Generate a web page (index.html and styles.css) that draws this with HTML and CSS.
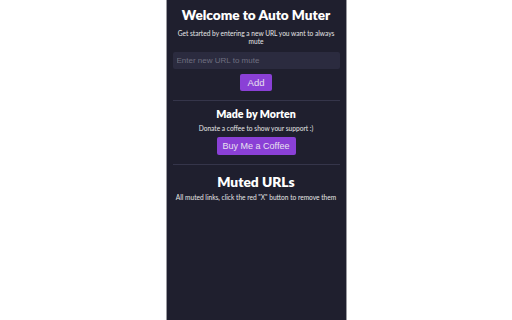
FILE: index.html
```html
<!DOCTYPE html>
<html>
<head>
<meta charset="utf-8">
<link rel="stylesheet" href="styles.css">
</head>
<body>
<div class="popup">
  <section class="section">
    <h1 class="title">Welcome to Auto Muter</h1>
    <p class="desc">Get started by entering a new URL you want to always mute</p>
    <input class="url-input" type="text" placeholder="Enter new URL to mute">
    <button class="btn add-btn">Add</button>
  </section>
  <hr class="divider">
  <section class="section">
    <h2 class="subtitle">Made by Morten</h2>
    <p class="desc tight">Donate a coffee to show your support :)</p>
    <button class="btn coffee-btn">Buy Me a Coffee</button>
  </section>
  <hr class="divider">
  <section class="section">
    <h1 class="title big">Muted URLs</h1>
    <p class="desc tight">All muted links, click the red "X" button to remove them</p>
  </section>
</div>
</body>
</html>
```
FILE: styles.css
```css
html, body {
  margin: 0;
  padding: 0;
  background: #ffffff;
  height: 100%;
}
body {
  display: flex;
  justify-content: center;
  font-family: "Lato", "Noto Sans", sans-serif;
}
.popup {
  width: 181px;
  height: 320px;
  box-sizing: border-box;
  background: #1f1f2e;
  border-left: 1px solid #9a9aa0;
  border-right: 1px solid #9a9aa0;
  padding: 0 6px;
  color: #f2f2f2;
}
.section {
  display: flex;
  flex-direction: column;
  align-items: center;
  text-align: center;
}
.title {
  margin: 6px 0 0 0;
  font-size: 13.6px;
  line-height: 19px;
  font-weight: 800;
  color: #ffffff;
}
.title.big {
  font-size: 13.8px;
  margin-top: 7px;
}
.subtitle {
  margin: 6px 0 0 0;
  font-size: 10.6px;
  line-height: 15px;
  font-weight: 800;
  color: #ffffff;
}
.desc {
  margin: 4px 0 0 0;
  font-size: 6.6px;
  line-height: 8px;
  color: #e6e6e6;
  padding: 0;
}
.desc.tight {
  margin-top: 2px;
  white-space: nowrap;
}
.url-input {
  margin-top: 7px;
  width: 100%;
  height: 17px;
  box-sizing: border-box;
  background: #2b2b3f;
  border: none;
  border-radius: 2px;
  padding: 0 4px;
  font-family: "Liberation Sans", Arial, sans-serif;
  font-size: 8px;
  color: #ddd;
  outline: none;
}
.url-input::placeholder {
  color: #6f6f80;
}
.btn {
  background: #8a40d6;
  color: #e8e0f0;
  border: none;
  border-radius: 2px;
  font-family: "Liberation Sans", Arial, sans-serif;
  font-size: 8.5px;
  padding: 0;
}
.add-btn {
  margin-top: 5px;
  width: 32px;
  height: 17px;
  font-size: 9.5px;
}
.coffee-btn {
  margin-top: 5px;
  width: 79px;
  height: 18px;
  font-size: 9px;
}
.divider {
  margin: 9px 0 0 0;
  border: none;
  border-top: 1px solid #35354a;
  height: 0;
}
```
